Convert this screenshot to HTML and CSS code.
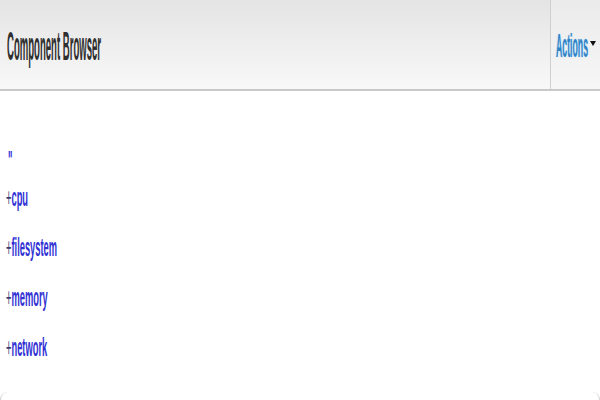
FILE: index.html
```html
<!DOCTYPE html>
<html>
<head>
<meta charset="utf-8">
<link rel="stylesheet" href="styles.css">
</head>
<body>
<div class="page">
  <header class="topbar">
    <div class="title-cell">
      <span class="squeeze title">Component Browser</span>
    </div>
    <div class="actions-cell">
      <span class="squeeze actions">Actions</span><span class="caret"></span>
    </div>
  </header>
  <ul class="tree">
    <li class="node quote"><span class="squeeze w-quote">"</span></li>
    <li class="node"><span class="squeeze w-cpu"><span class="plus">+</span>cpu</span></li>
    <li class="node"><span class="squeeze w-fs"><span class="plus">+</span>filesystem</span></li>
    <li class="node"><span class="squeeze w-mem"><span class="plus">+</span>memory</span></li>
    <li class="node"><span class="squeeze w-net"><span class="plus">+</span>network</span></li>
  </ul>
  <div class="foot"></div>
</div>
</body>
</html>
```
FILE: styles.css
```css
html, body {
  margin: 0;
  padding: 0;
  background: #ffffff;
}

.page {
  width: 600px;
  height: 400px;
  display: flex;
  flex-direction: column;
  overflow: hidden;
  font-family: "Liberation Sans", Arial, sans-serif;
}

.squeeze {
  display: inline-block;
  white-space: nowrap;
  transform-origin: left center;
}

.topbar {
  height: 89px;
  flex: none;
  display: flex;
  border-bottom: 2px solid #c9c9c9;
  background: linear-gradient(#e4e4e4, #f8f8f8);
}

.title-cell {
  flex: 1;
  display: flex;
  align-items: center;
  padding-left: 7px;
  padding-top: 2px;
}

.title {
  font-size: 40px;
  line-height: 44px;
  font-weight: bold;
  color: #2f2f2f;
  width: 94px;
  transform: scaleX(0.239);
}

.actions-cell {
  box-sizing: border-box;
  width: 50px;
  flex: none;
  display: flex;
  align-items: center;
  padding-left: 5px;
  border-left: 1px solid #cfcfcf;
  background: linear-gradient(#ebebeb, #f6f6f6);
}

.actions {
  font-size: 34px;
  line-height: 38px;
  font-weight: bold;
  color: #2f84c6;
  text-shadow: 0 0 3px #a9d8ff;
  width: 32px;
  transform: scaleX(0.257);
}

.caret {
  width: 0;
  height: 0;
  margin-left: 2px;
  margin-top: -3px;
  border-left: 3px solid transparent;
  border-right: 3px solid transparent;
  border-top: 5px solid #111;
}

.tree {
  list-style: none;
  margin: 0;
  padding: 57px 0 0 6px;
  flex: 1;
}

.node {
  font-size: 25px;
  line-height: 50px;
  height: 50px;
  font-weight: bold;
  color: #3030d4;
}

.node.quote {
  line-height: 24px;
  height: 24px;
  padding-left: 2px;
}

.plus {
  color: #3a3a70;
  font-weight: normal;
}

.w-quote { width: 4px; transform: scaleX(0.373); }
.w-cpu { width: 22px; transform: scaleX(0.373); }
.w-fs { width: 51px; transform: scaleX(0.373); }
.w-mem { width: 41px; transform: scaleX(0.373); }
.w-net { width: 40px; transform: scaleX(0.373); }

.foot {
  height: 8px;
  flex: none;
  border-left: 1px solid #d0d0d0;
  border-right: 1px solid #d0d0d0;
  border-radius: 8px 8px 0 0;
}
```
